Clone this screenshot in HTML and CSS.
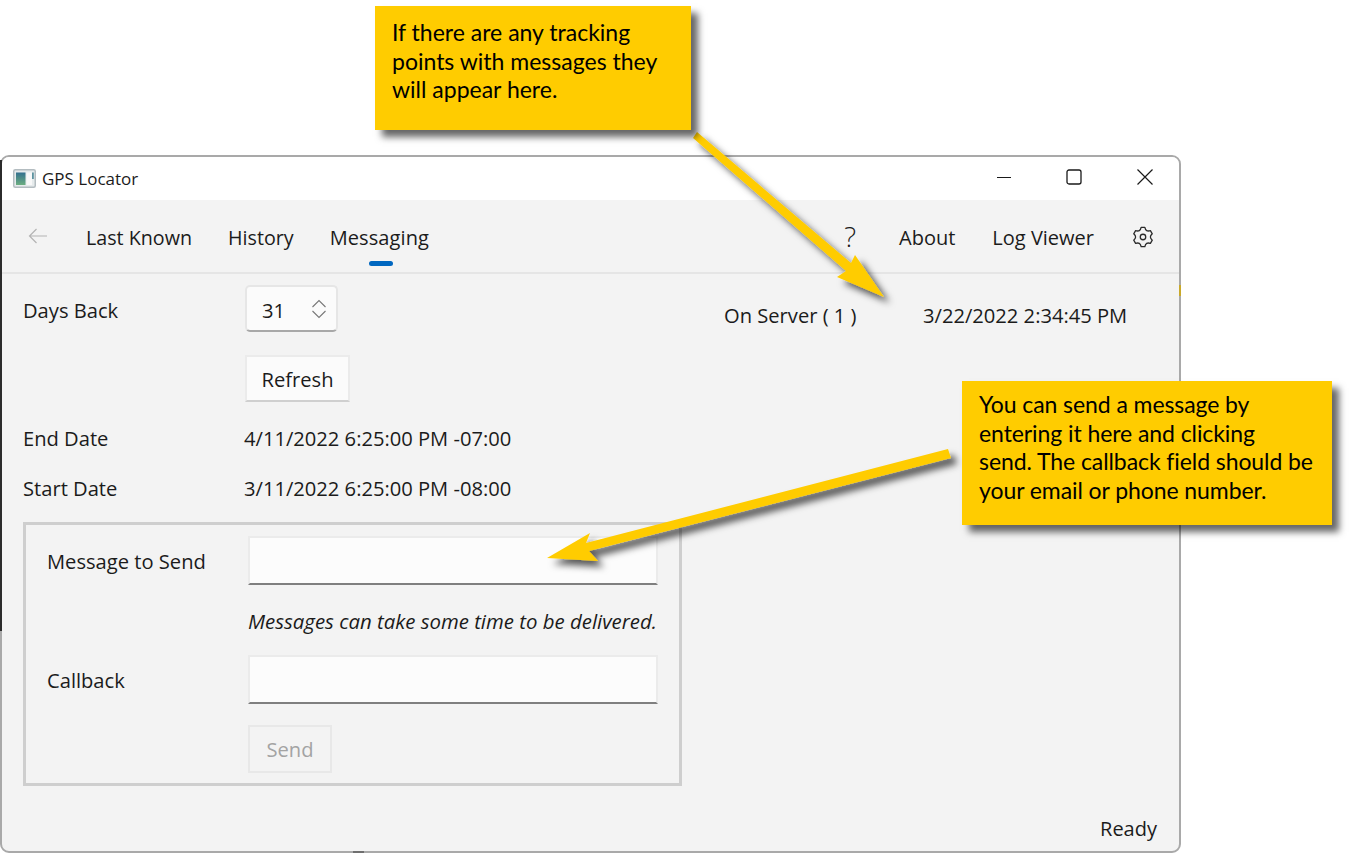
FILE: index.html
```html
<!DOCTYPE html>
<html lang="en">
<head>
  <meta charset="UTF-8">
  <title>GPS Locator</title>
  <link rel="stylesheet" href="styles.css">
</head>
<body>

  <div class="window">
    <div class="title-bar">
      <svg class="app-icon" width="23" height="19" viewBox="0 0 23 19">
        <defs>
          <linearGradient id="mapFill" x1="0" y1="0" x2="0" y2="1">
            <stop offset="0" stop-color="#33708f"/>
            <stop offset="1" stop-color="#6cae80"/>
          </linearGradient>
        </defs>
        <rect x="0.75" y="0.75" width="21.5" height="17.5" rx="1.5" fill="#e6ebec" stroke="#b3bcc0" stroke-width="1.5"/>
        <rect x="3" y="3.5" width="9.5" height="12.5" fill="url(#mapFill)"/>
        <rect x="13.5" y="3.5" width="5.5" height="12.5" fill="#f8f8f8"/>
        <rect x="19" y="3.5" width="1.8" height="6.5" fill="#5d93a0"/>
      </svg>
      <span class="app-title">GPS Locator</span>
      <div class="window-controls">
        <svg width="16" height="16" viewBox="0 0 16 16"><path d="M2 8.5h14" stroke="#1a1a1a" stroke-width="1"/></svg>
        <svg width="16" height="16" viewBox="0 0 16 16"><rect x="1" y="1" width="14" height="14" rx="2" fill="none" stroke="#1a1a1a" stroke-width="1.3"/></svg>
        <svg width="16" height="16" viewBox="0 0 16 16"><path d="M0.5 0.5l15 15M15.5 0.5l-15 15" stroke="#1a1a1a" stroke-width="1.2"/></svg>
      </div>
    </div>

    <div class="nav-bar">
      <svg class="back-icon" width="20" height="16" viewBox="0 0 20 16"><path d="M19 8H1.5M8.5 1L1.5 8l7 7" fill="none" stroke="#b4b4b4" stroke-width="1.2"/></svg>
      <a class="nav-item">Last Known</a>
      <a class="nav-item">History</a>
      <a class="nav-item selected">Messaging</a>
      <div class="nav-right">
        <a class="nav-item help">?</a>
        <a class="nav-item">About</a>
        <a class="nav-item">Log Viewer</a>
        <svg class="gear-icon" width="22" height="22" viewBox="0 0 24 24" fill="none" stroke="#2a2a2a" stroke-width="1.4" stroke-linejoin="round">
          <circle cx="12" cy="12" r="3"/>
          <path d="M9.96 1.5H14.04Q15 6.8 20.08 4.98L22.12 8.52Q18 12 22.12 15.48L20.08 19.02Q15 17.2 14.04 22.5H9.96Q9 17.2 3.92 19.02L1.88 15.48Q6 12 1.88 8.52L3.92 4.98Q9 6.8 9.96 1.5Z"/>
        </svg>
      </div>
    </div>

    <div class="content">
      <div class="left-column">
        <div class="form-row days-row">
          <span class="field-label">Days Back</span>
          <div class="spinner">
            <span>31</span>
            <svg width="16" height="20" viewBox="0 0 16 20" fill="none" stroke="#777" stroke-width="1.1"><path d="M1.5 8L8 1.5 14.5 8M1.5 12L8 18.5 14.5 12"/></svg>
          </div>
        </div>
        <div class="form-row refresh-row">
          <span class="field-label"></span>
          <button class="btn">Refresh</button>
        </div>
        <div class="form-row date-row">
          <span class="field-label">End Date</span>
          <span>4/11/2022 6:25:00 PM -07:00</span>
        </div>
        <div class="form-row date-row">
          <span class="field-label">Start Date</span>
          <span>3/11/2022 6:25:00 PM -08:00</span>
        </div>

        <div class="send-box">
          <div class="send-row">
            <span class="send-label">Message to Send</span>
            <input type="text" class="text-input">
          </div>
          <div class="send-note">Messages can take some time to be delivered.</div>
          <div class="send-row">
            <span class="send-label">Callback</span>
            <input type="text" class="text-input">
          </div>
          <div class="send-row send-action">
            <span class="send-label"></span>
            <button class="btn btn-disabled" disabled>Send</button>
          </div>
        </div>
      </div>

      <div class="right-column">
        <span class="server-count">On Server ( 1 )</span>
        <span>3/22/2022 2:34:45 PM</span>
      </div>
    </div>

    <div class="status-bar">Ready</div>
  </div>

  <!-- Annotations lying over the screenshot -->
  <div class="window-edge"></div>
  <div class="edge-speck speck-right"></div>
  <div class="edge-speck speck-bottom"></div>

  <svg class="arrows" width="1352" height="853" viewBox="0 0 1352 853">
    <defs>
      <filter id="arrowShadow" x="-20%" y="-20%" width="140%" height="140%">
        <feDropShadow dx="6" dy="6" stdDeviation="3.5" flood-color="#000" flood-opacity="0.65"/>
      </filter>
    </defs>
    <polygon filter="url(#arrowShadow)" fill="#ffcc00" points="697,132 851,263 855,255 884,297 837,277 846,271 693,138"/>
    <polygon filter="url(#arrowShadow)" fill="#ffcc00" points="948,449 951,458 589,551 598,561 547,558 590,533 586,543"/>
  </svg>

  <div class="callout callout-top">If there are any tracking<br>points with messages they<br>will appear here.</div>
  <div class="callout callout-side">You can send a message by<br>entering it here and clicking<br>send. The callback field should be<br>your email or phone number.</div>

</body>
</html>
```

FILE: styles.css
```css
html, body {
  margin: 0;
  padding: 0;
  height: 853px;
  overflow: hidden;
  background-color: #fff;
}

body {
  font-family: "Open Sans", "Noto Sans", sans-serif;
  font-size: 20px;
  color: #1b1b1b;
  padding-top: 155px;
  box-sizing: border-box;
}

/* Window */
.window {
  width: 1181px;
  height: 698px;
  box-sizing: border-box;
  border: 2px solid #a9a9a9;
  border-radius: 9px;
  background-color: #f3f3f3;
  display: flex;
  flex-direction: column;
  overflow: hidden;
}

.window-edge {
  position: absolute;
  left: 0;
  top: 160px;
  width: 2px;
  height: 471px;
  background-color: #2b2b2b;
}

.edge-speck {
  position: absolute;
}

.speck-right {
  left: 1179px;
  top: 285px;
  width: 2px;
  height: 11px;
  background-color: #c9a92a;
}

.speck-bottom {
  left: 353px;
  top: 851px;
  width: 11px;
  height: 2px;
  background-color: #6f6f6f;
}

.title-bar {
  height: 43px;
  flex: none;
  background-color: #fff;
  display: flex;
  align-items: center;
  padding-left: 11px;
}

.app-icon {
  margin-right: 6px;
}

.app-title {
  font-size: 17px;
}

.window-controls {
  margin-left: auto;
  display: flex;
  gap: 55px;
  padding: 0 26px 3px 0;
  align-items: center;
}

/* Navigation */
.nav-bar {
  height: 74px;
  flex: none;
  box-sizing: border-box;
  border-bottom: 2px solid #e5e5e5;
  display: flex;
  align-items: center;
  padding: 4px 0 0 26px;
  font-size: 19.7px;
}

.back-icon {
  margin: 0 38px 4px 0;
}

.nav-item {
  margin-right: 36px;
  position: relative;
  line-height: 28px;
}

.nav-item.selected {
  font-size: 20px;
  letter-spacing: 0.1px;
}

.nav-item.selected::after {
  content: "";
  position: absolute;
  left: 39px;
  bottom: -14px;
  width: 24px;
  height: 5px;
  border-radius: 3px;
  background-color: #0067c0;
}

.nav-right {
  margin-left: auto;
  display: flex;
  align-items: center;
  padding-right: 25px;
  font-size: 20px;
}

.nav-right .nav-item {
  margin-right: 37px;
}

.nav-right .nav-item:nth-child(3) {
  margin-right: 38px;
}

.nav-right .nav-item.help {
  font-size: 28px;
  font-weight: 300;
  margin-right: 43px;
  top: -2px;
}

.gear-icon {
  margin-bottom: 3px;
}

/* Content */
.content {
  flex: 1;
  display: flex;
  padding: 11px 0 0 21px;
  font-size: 20.15px;
}

.left-column {
  width: 659px;
}

.right-column {
  display: flex;
  height: 30px;
  padding: 15px 0 0 42px;
  line-height: 30px;
}

.server-count {
  width: 199px;
}

.form-row {
  display: flex;
  align-items: center;
}

.field-label {
  width: 221px;
  flex: none;
}

.days-row {
  height: 47px;
}

.days-row .field-label {
  padding-top: 2px;
}

.refresh-row {
  margin-top: 23px;
}

.date-row {
  height: 50px;
}

.refresh-row + .date-row {
  margin-top: 11px;
}

.spinner {
  width: 93px;
  height: 47px;
  margin-left: 1px;
  box-sizing: border-box;
  border: 2px solid #e6e6e6;
  border-bottom-color: #a8a8a8;
  border-radius: 5px;
  background-color: #fbfbfb;
  display: flex;
  align-items: center;
  justify-content: space-between;
  padding: 2px 9px 0 15px;
}

.spinner svg {
  margin-top: -1px;
}

.btn {
  font: inherit;
  color: inherit;
  width: 105px;
  height: 47px;
  margin-left: 1px;
  box-sizing: border-box;
  border: 2px solid #ebebeb;
  border-bottom-color: #cfcfcf;
  background-color: #fbfbfb;
  padding: 0;
}

.btn-disabled {
  width: 84px;
  height: 48px;
  margin-left: 0;
  color: #a3a3a3;
  background-color: #f3f3f3;
  border-color: #e8e8e8;
  padding: 0;
}

/* Send message box */
.send-box {
  width: 659px;
  height: 264px;
  box-sizing: border-box;
  margin-top: 9px;
  border: 3px solid #cecece;
  padding: 11px 0 0 21px;
}

.send-row {
  display: flex;
  align-items: center;
}

.send-label {
  width: 201px;
  flex: none;
}

.text-input {
  width: 410px;
  height: 49px;
  box-sizing: border-box;
  border: 2px solid #ebebeb;
  border-bottom-color: #7f7f7f;
  background-color: #fcfcfc;
  padding: 0;
}

.send-note {
  margin: 0 0 0 201px;
  height: 70px;
  line-height: 72px;
  font-size: 20.4px;
  font-style: italic;
  white-space: nowrap;
}

.send-action {
  margin-top: 21px;
}

.status-bar {
  flex: none;
  text-align: right;
  padding: 0 22px 7px 0;
  line-height: 30px;
}

/* Annotations */
.arrows {
  position: absolute;
  left: 0;
  top: 0;
}

.callout {
  position: absolute;
  box-sizing: border-box;
  background-color: #ffcc00;
  color: #000;
  font-family: Lato, "Open Sans", sans-serif;
  font-size: 23px;
  white-space: nowrap;
  box-shadow: 7px 7px 7px rgba(0, 0, 0, 0.6);
}

.callout-top {
  left: 375px;
  top: 6px;
  width: 316px;
  height: 124px;
  padding: 12px 0 0 17px;
  line-height: 28.5px;
}

.callout-side {
  left: 962px;
  top: 381px;
  width: 370px;
  height: 144px;
  padding: 9px 0 0 17px;
  line-height: 28.7px;
  letter-spacing: -0.08px;
}
```
